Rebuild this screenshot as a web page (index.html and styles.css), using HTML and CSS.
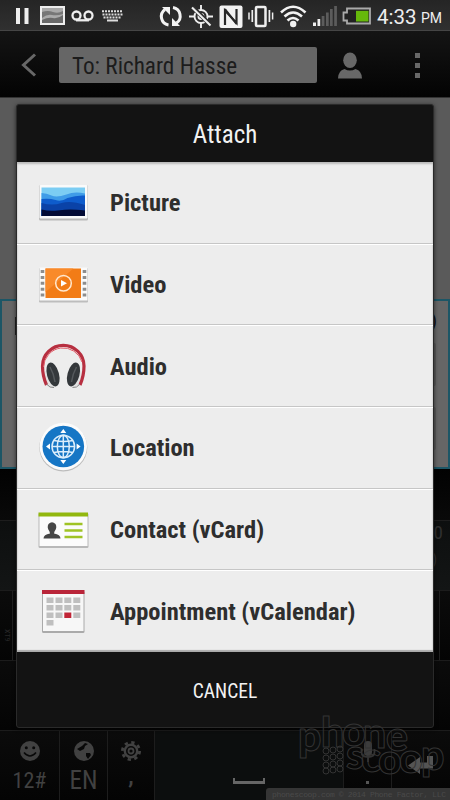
FILE: index.html
```
<!DOCTYPE html>
<html lang="en">
<head>
  <meta charset="UTF-8" />
  <meta name="viewport" content="width=device-width, initial-scale=1.0"/>
  <title>Attach</title>
  <link rel="stylesheet" href="styles.css">
</head>
<body>

<div class="phone">
  <div class="status-bar">
    <svg width="450" height="31" viewBox="0 0 450 31">
      <!-- pause -->
      <path d="M16 8h4v16h-4zM24.500 8h4v16h-4z" fill="#eee"/>
      <!-- screenshot -->
      <rect x="41" y="7" width="23" height="17" fill="#aaa" stroke="#eee" stroke-width="2"/>
      <path d="M42 12q6-2 11 0t10-1v3q-6 2-11 1t-10 3z" fill="#777"/>
      <path d="M42 20q6-3 11-2t10-3v8H42z" fill="#6a6a6a"/>
      <!-- voicemail -->
      <g fill="none" stroke="#eee" stroke-width="2.300">
        <circle cx="76.500" cy="15.500" r="4"/>
        <circle cx="88.500" cy="15.500" r="4"/>
        <path d="M76 20.300h13"/>
      </g>
      <!-- keyboard -->
      <g stroke="#ddd" stroke-width="2" stroke-dasharray="2 1" fill="none">
        <path d="M102 11.200h21M102.500 14.400h20M103.500 17.400h18"/>
        <path d="M107 20.500h11" stroke-dasharray="none"/>
      </g>
      <!-- sync -->
      <g fill="none" stroke="#f2f2f2" stroke-width="3">
        <path d="M168.500 25a8.600 8.600 0 0 1-3.500-15.500"/>
        <path d="M173 7.500a8.600 8.600 0 0 1 3.500 15.500"/>
      </g>
      <path d="M162 7h8v8zM180 26h-8v-8z" fill="#f2f2f2"/>
      <!-- gps off -->
      <g fill="none" stroke="#eee" stroke-width="1.900">
        <circle cx="201" cy="16.500" r="6.500"/>
        <circle cx="201" cy="16.500" r="2.500"/>
        <path d="M201 5v5M201 23v5M189 16.500h5M208 16.500h5"/>
        <path d="M192.500 7l18 18" stroke="#303030" stroke-width="4.500"/>
        <path d="M192 7.500l18.500 18" stroke-width="2"/>
      </g>
      <!-- nfc -->
      <rect x="219.500" y="5.500" width="23" height="22.500" rx="2" fill="#f2f2f2"/>
      <path d="M225 25V10.500l11.500 12.500V9" fill="none" stroke="#282828" stroke-width="2.200"/>
      <path d="M225 9l11.500 15" stroke="#282828" stroke-width="2"/>
      <!-- vibrate -->
      <g fill="none" stroke="#eee">
        <rect x="256" y="7" width="9.500" height="19" rx="1" stroke-width="2.500"/>
        <path d="M252.300 10v12M269.400 10v12" stroke-width="1.700"/>
        <path d="M249 12.500v7M272.600 12.500v7" stroke-width="1.500"/>
      </g>
      <!-- wifi -->
      <g fill="none" stroke="#f2f2f2" stroke-width="2.600">
        <path d="M281 12.500q12-11.500 24.500 0"/>
        <path d="M284.500 16.500q8.500-8 17.500 0"/>
        <path d="M287.500 20.500q5.500-5 11 0"/>
      </g>
      <circle cx="293.200" cy="24" r="3.200" fill="#f2f2f2"/>
      <!-- signal -->
      <path d="M313 22.500h3V26h-3zM317.500 19h2.700v7h-2.700z" fill="#eee"/>
      <path d="M321.700 16h2.700v10h-2.700zM326 12.500h2.700V26H326zM330 9h2.700v17H330zM334.200 6h2.700v20h-2.700z" fill="#5c5c5c"/>
      <!-- battery -->
      <path d="M347 8.500h23v15h-23v-3h-3.500v-8h3.500z" fill="#222" stroke="#aaa" stroke-width="1.800"/>
      <path d="M356 10.800h12.500v10.700H356z" fill="#66b90b"/>
    </svg>
    <span class="clock">4:33</span>
    <span class="meridiem">PM</span>
  </div>

  <div class="action-bar">
    <svg class="back" width="16" height="24" viewBox="0 0 16 24">
      <path d="M14 1.500L2.500 12 14 22.500" fill="none" stroke="#686868" stroke-width="3"/>
    </svg>
    <div class="recipient">To: Richard Hasse</div>
    <svg class="person" width="24" height="27" viewBox="0 0 24 27">
      <ellipse cx="12" cy="8.300" rx="6.800" ry="7.800" fill="#686868"/>
      <path d="M0 26.500q0-7.500 6.500-9.500 5.500 3 11 0Q24 19 24 26.500z" fill="#686868"/>
    </svg>
    <div class="overflow"><i></i><i></i><i></i></div>
  </div>

  <div class="messages"></div>
  <div class="compose">
    <span class="compose-cursor"></span>
    <div class="compose-side"><span>)</span><i></i><i></i></div>
  </div>

  <div class="keyboard">
    <div class="panel"></div>
    <div class="suggestions"><span>0</span><b>)</b></div>
    <div class="key-row short"><span class="xt9">XT9</span><i></i><i></i></div>
    <div class="key-row"></div>
    <div class="key-row bottom">
      <div class="key">
        <svg width="20" height="20" viewBox="0 0 20 20">
          <circle cx="10" cy="10" r="10" fill="#414141"/>
          <circle cx="6.300" cy="6.800" r="1.500" fill="#080808"/>
          <circle cx="13.700" cy="6.800" r="1.500" fill="#080808"/>
          <path d="M4 11.500q6 7 12 0" fill="none" stroke="#080808" stroke-width="1.600"/>
        </svg>
        <span>12#</span>
      </div>
      <div class="key">
        <svg width="20" height="20" viewBox="0 0 20 20">
          <circle cx="10" cy="10" r="10" fill="#414141"/>
          <path d="M11 2l3 1-3 2-1 3-4 2-3-2 5-3zM12 12l4 0 1 2-3 4-2-3z" fill="#080808"/>
        </svg>
        <span class="lang">EN</span>
      </div>
      <div class="key">
        <svg width="20" height="20" viewBox="0 0 20 20">
          <circle cx="10" cy="10" r="8.600" fill="none" stroke="#414141" stroke-width="2.800" stroke-dasharray="3.300 3.450"/>
          <circle cx="10" cy="10" r="6.200" fill="none" stroke="#414141" stroke-width="2.400"/>
          <circle cx="10" cy="10" r="2.500" fill="none" stroke="#414141" stroke-width="1.800"/>
        </svg>
        <span class="comma">,</span>
      </div>
      <div class="key space"><i></i></div>
      <div class="key">
        <svg width="16" height="22" viewBox="0 0 16 22">
          <rect x="4" y="0" width="8" height="15" rx="4" fill="#3c3c3c"/>
          <path d="M1.500 8v3q0 5 6.500 5t6.500-5V8M8 16v5" fill="none" stroke="#333" stroke-width="1.800"/>
        </svg>
        <span class="dot"></span>
      </div>
      <div class="key enter">
        <svg width="26" height="19" viewBox="0 0 26 19">
          <path d="M0 10.500L12 2v5.500h7V1h6v12.500H12V19z" fill="#545454"/>
        </svg>
      </div>
    </div>
  </div>

  <div class="dialog">
    <div class="dialog-title">Attach</div>
    <ul class="options">
      <li>
        <svg width="52" height="52" viewBox="0 0 52 52">
          <rect x="2" y="9" width="49" height="35.500" rx="1.500" fill="#b9b9b9"/>
          <rect x="2.500" y="9" width="48" height="33.500" rx="1" fill="#fafafa"/>
          <rect x="4.500" y="11.500" width="43.500" height="28.500" fill="#7ccdf3"/>
          <path d="M4.500 17q5 0 10 2.500t15-1q8-3.500 18.500-1V40H4.500z" fill="#3f9ce8"/>
          <path d="M4.500 23q8-1 14 1t12-2q9-3 17.500-2.500V40H4.500z" fill="#0e5ccc"/>
          <path d="M4.500 27q11 3 20 0t23.500 2v11H4.500z" fill="#0a42a7"/>
          <path d="M4.500 33.500q8 2 16 1t13-1 14.500 1V40H4.500z" fill="#030b35"/>
        </svg>
        <span>Picture</span>
      </li>
      <li>
        <svg width="52" height="52" viewBox="0 0 52 52">
          <rect x="2" y="10" width="49" height="34.500" rx="1" fill="#bdbdbd"/>
          <rect x="2.500" y="9.500" width="48" height="33" fill="#fafafa"/>
          <path d="M8.500 10.500h35.500v29.500H8.500z" fill="#f27c16"/>
          <path d="M8.500 10.500h28L8.500 34z" fill="#f98a2a"/>
          <g stroke="#8d8d8d" stroke-width="3.600" stroke-dasharray="3 2.900">
            <path d="M5.500 12v28M47.500 12v28"/>
          </g>
          <circle cx="26.500" cy="25.300" r="7.800" fill="none" stroke="#ffe8cf" stroke-width="1.500"/>
          <path d="M24 22l6 3.300-6 3.300z" fill="#fff"/>
        </svg>
        <span>Video</span>
      </li>
      <li>
        <svg width="52" height="52" viewBox="0 0 52 52">
          <path d="M8 31q-1 11 2 15l8 1.500-5-18zM44.500 31q1 11-2 15l-8 1.500 5-18z" fill="#e2e2e2"/>
          <path d="M9.500 45Q5.500 36 5.500 26a20.700 20.500 0 0 1 41.500 0q0 10-4 19" fill="none" stroke="#b72f40" stroke-width="3.200"/>
          <path d="M6.500 27a19.700 20 0 0 1 38.500-5" fill="none" stroke="#e25d68" stroke-width="1"/>
          <path d="M9.500 44l3.500 3 4 .5M43 44l-3.500 3-4 .5" fill="none" stroke="#888" stroke-width="1"/>
          <ellipse cx="16" cy="34.500" rx="6" ry="12.200" fill="#34383b" transform="rotate(-15 16 34.500)"/>
          <ellipse cx="36.500" cy="34.500" rx="6" ry="12.200" fill="#34383b" transform="rotate(15 36.500 34.500)"/>
          <path d="M13 27q4 7 5 15M39.500 27q-4 7-5 15" fill="none" stroke="#55595c" stroke-width="1.500"/>
        </svg>
        <span>Audio</span>
      </li>
      <li>
        <svg width="52" height="52" viewBox="0 0 52 52">
          <circle cx="26.300" cy="26.500" r="24" fill="#bcbcbc"/>
          <circle cx="26.300" cy="25.500" r="23.700" fill="#fbfbfb"/>
          <circle cx="26.300" cy="25.500" r="20.800" fill="#1676c5"/>
          <g fill="none" stroke="#dceefb" stroke-width="1.500">
            <circle cx="26.300" cy="25.500" r="11.300"/>
            <ellipse cx="26.300" cy="25.500" rx="6" ry="11.300"/>
            <path d="M26.300 14v23M15 25.500h23M17 19.500q9.500 2 19 0M17 31.500q9.500-2 19 0"/>
          </g>
          <path d="M26.300 8l3 4h-6zM26.300 43l3-4h-6zM9 25.500l4-3v6zM43.600 25.500l-4-3v6z" fill="#fff"/>
        </svg>
        <span>Location</span>
      </li>
      <li>
        <svg width="52" height="52" viewBox="0 0 52 52">
          <rect x="1.500" y="10" width="50" height="35" rx="1.500" fill="#b8b8b8"/>
          <rect x="2.500" y="12" width="48" height="31" fill="#fbfbfb"/>
          <path d="M1.500 9.500h49.500v4H1.500z" fill="#92b80e"/>
          <path d="M6.500 35.500q0-4 6.500-5l-.5-2q-3-4-1-7.500 3.500-3.500 7 0 2 3.500-1 7.500l-.5 2q6.500 1 6.500 5z" fill="#454545"/>
          <path d="M27.500 21h18M27.500 27.500h18M27.500 34h18" stroke="#9fc324" stroke-width="2.300"/>
        </svg>
        <span>Contact (vCard)</span>
      </li>
      <li>
        <svg width="52" height="52" viewBox="0 0 52 52">
          <rect x="5" y="6" width="42.500" height="42" rx="1.500" fill="#aaa"/>
          <rect x="6" y="8" width="40.500" height="38" fill="#f7f7f7"/>
          <path d="M5 5h42.500v4H5z" fill="#b92539"/>
          <path d="M9.500 12.500h7v5.500h-7zM18.500 12.500h7v5.500h-7zM27.300 12.500h7v5.500h-7zM36.300 12.500h7v5.500h-7zM9.500 20h7v5.500h-7zM18.500 20h7v5.500h-7zM27.300 20h7v5.500h-7zM36.300 20h7v5.500h-7zM9.500 27.500h7V33h-7zM18.500 27.500h7V33h-7zM36.300 27.500h7V33h-7zM9.500 35h7v5.500h-7z" fill="#bfbfbf"/>
          <path d="M27.300 27.500h7V33h-7z" fill="#c02436"/>
        </svg>
        <span>Appointment (vCalendar)</span>
      </li>
    </ul>
    <div class="dialog-cancel">CANCEL</div>
  </div>

  <svg class="watermark" width="184" height="100" viewBox="266 700 184 100">
    <g class="logo">
      <text x="298 321 342 363 386" y="751 747 746 748 751">phone</text>
      <text x="346 361 378 399 421" y="769 772 774 773 770">scoop</text>
    </g>
    <g class="dots">
      <circle cx="326" cy="751" r="3"/><circle cx="333" cy="750" r="3"/><circle cx="340" cy="749" r="3"/>
      <circle cx="326" cy="758" r="3"/><circle cx="333" cy="757" r="3"/><circle cx="340" cy="756" r="3"/>
      <circle cx="326" cy="765" r="3"/><circle cx="333" cy="764" r="3"/><circle cx="340" cy="763" r="3"/>
      <circle cx="326" cy="771" r="3"/><circle cx="333" cy="770" r="3"/><circle cx="340" cy="769" r="3"/>
    </g>
    <path d="M266 800v-9q0-3 3-3h181v12z" fill="#353535"/>
    <text class="credit" x="272" y="797" textLength="174">phonescoop.com © 2014 Phone Factor, LLC</text>
  </svg>
</div>

</body>
</html>
```
FILE: styles.css
```
body {
  font-family: "Roboto Condensed", Roboto, sans-serif;
  margin: 0;
  background-color: #000;
}

.phone {
  position: relative;
  width: 450px;
  height: 800px;
  overflow: hidden;
  display: flex;
  flex-direction: column;
}

.status-bar {
  position: relative;
  height: 31px;
  background: linear-gradient(#252525, #303030);
  border-bottom: 1px solid #454545;
  box-sizing: border-box;
  color: #eee;
  font-family: Roboto, sans-serif;
}

.clock,
.meridiem {
  position: absolute;
  line-height: 30px;
  top: 2px;
  left: 377px;
  font-size: 20.5px;
}

.meridiem {
  left: 421px;
  top: 3px;
  font-size: 14px;
}

.action-bar {
  height: 66px;
  box-sizing: border-box;
  display: flex;
  align-items: center;
  padding: 2px 27px 0 21px;
  background: linear-gradient(#141414, #030303);
}

.recipient {
  width: 258px;
  height: 36px;
  margin-left: 22px;
  padding-left: 13px;
  box-sizing: border-box;
  background-color: #666;
  border-radius: 2px;
  color: #1c1c1c;
  font-size: 23.2px;
  line-height: 38px;
}

.person {
  margin-left: 21px;
}

.overflow {
  display: flex;
  flex-direction: column;
  gap: 5px;
  margin-left: auto;
  margin-right: 1px;
}

.overflow i {
  width: 5px;
  height: 5px;
  margin-right: 2px;
  background-color: #686868;
}

.messages {
  height: 202px;
  box-sizing: border-box;
  border-top: 1px solid #333;
  background-color: #5a5a5a;
}

.compose {
  height: 170px;
  box-sizing: border-box;
  border: 2px solid #1c5666;
  background-color: #666;
  display: flex;
  justify-content: space-between;
}

.compose-cursor {
  width: 2px;
  height: 18px;
  margin: 16px 0 0 13px;
  background-color: #222;
}

.compose-side {
  width: 17px;
  color: #111;
}

.compose-side span {
  display: block;
  height: 42px;
  padding-top: 8px;
  box-sizing: border-box;
  font-size: 19px;
}

.compose-side i {
  display: block;
  width: 5px;
  height: 43px;
  margin-bottom: 21px;
  background-color: #595959;
  border-radius: 2px;
}

.keyboard {
  flex: 1;
  background-color: #060606;
}

.panel {
  height: 51px;
  background: linear-gradient(#020202, #090909);
}

.suggestions {
  height: 70px;
  box-sizing: border-box;
  border-top: 1px solid #1d1d1d;
  background: linear-gradient(#0d0f0f, #131515);
  display: flex;
  flex-direction: column;
  align-items: flex-end;
  color: #303030;
  font-size: 19px;
}

.suggestions span {
  padding-right: 7px;
}

.suggestions b {
  padding-right: 13px;
  margin-top: 7px;
  font-size: 14px;
  font-weight: 400;
}

.key-row {
  height: 70px;
  box-sizing: border-box;
  border-top: 1px solid #1c1c1c;
  background: linear-gradient(#0b0b0b, #040404);
}

.short {
  display: flex;
  justify-content: space-between;
}

.short i {
  width: 1px;
  background-color: #202020;
}

.short i + i {
  margin-right: 10px;
}

.short i:first-of-type {
  margin-right: auto;
}

.xt9 {
  width: 12px;
  color: #272727;
  font-size: 8px;
  writing-mode: vertical-rl;
  text-align: center;
  padding-top: 20px;
  box-sizing: border-box;
}

.bottom {
  display: grid;
  grid-template-columns: 60px 48px 47px 189px 48px 58px;
}

.key {
  border-right: 1px solid #1d1d1d;
  display: flex;
  flex-direction: column;
  align-items: center;
  padding-top: 10px;
  color: #414141;
  font-size: 22px;
  line-height: 40px;
}

.key .comma {
  margin-top: -4px;
  font-weight: 700;
}

.key .lang {
  font-size: 25px;
}

.space {
  background-color: #0c0e0e;
}

.space i {
  width: 28px;
  height: 3px;
  margin-top: 37px;
  border: solid #666;
  border-width: 0 2px 3px;
}

.key .dot {
  width: 3px;
  height: 3px;
  margin-top: 18px;
  background-color: #555;
}

.enter {
  border-right: 0;
}

.enter svg {
  margin-top: 14px;
}

.dialog {
  position: absolute;
  top: 104px;
  left: 16px;
  width: 418px;
  height: 624px;
  box-sizing: border-box;
  border: 1px solid #2a2a2a;
  border-radius: 3px;
  background-color: #131313;
  box-shadow: 0 1px 4px rgba(0,0,0,0.6);
  color: #f2f2f2;
  display: flex;
  flex-direction: column;
}

.dialog-title {
  flex: none;
  height: 57px;
  line-height: 60px;
  text-align: center;
  font-size: 25px;
}

.options {
  list-style-type: none;
  margin: 0;
  padding: 0;
  flex: none;
  height: 490px;
  display: grid;
  grid-template-rows: repeat(6, 1fr);
  background-color: #ededed;
  box-shadow: inset 0 2px 2px #bbb, inset 0 -2px 1px #aaa;
}

.options li {
  display: flex;
  align-items: center;
  padding-left: 20px;
  border-bottom: 1px solid #c6c6c6;
  box-shadow: 0 1px 0 #fff;
  color: #2e2e2e;
  font-size: 24.5px;
  font-weight: 700;
}

.options li:last-child {
  border-bottom: 0;
  box-shadow: none;
}

.options li span {
  margin-left: 21px;
  padding-top: 1px;
  white-space: nowrap;
}

.dialog-cancel {
  flex: 1;
  line-height: 79px;
  text-align: center;
  font-size: 19.5px;
}

.watermark {
  position: absolute;
  left: 266px;
  top: 700px;
}

.logo text {
  font-family: Lato, Roboto, sans-serif;
  font-size: 41px;
  font-weight: 900;
  fill: none;
  stroke: #333;
  stroke-width: 1;
}

.dots {
  fill: none;
  stroke: #333;
  stroke-width: 1;
}

.credit {
  font-family: "Liberation Mono", monospace;
  font-size: 8px;
  fill: #4a4a4a;
}
```
